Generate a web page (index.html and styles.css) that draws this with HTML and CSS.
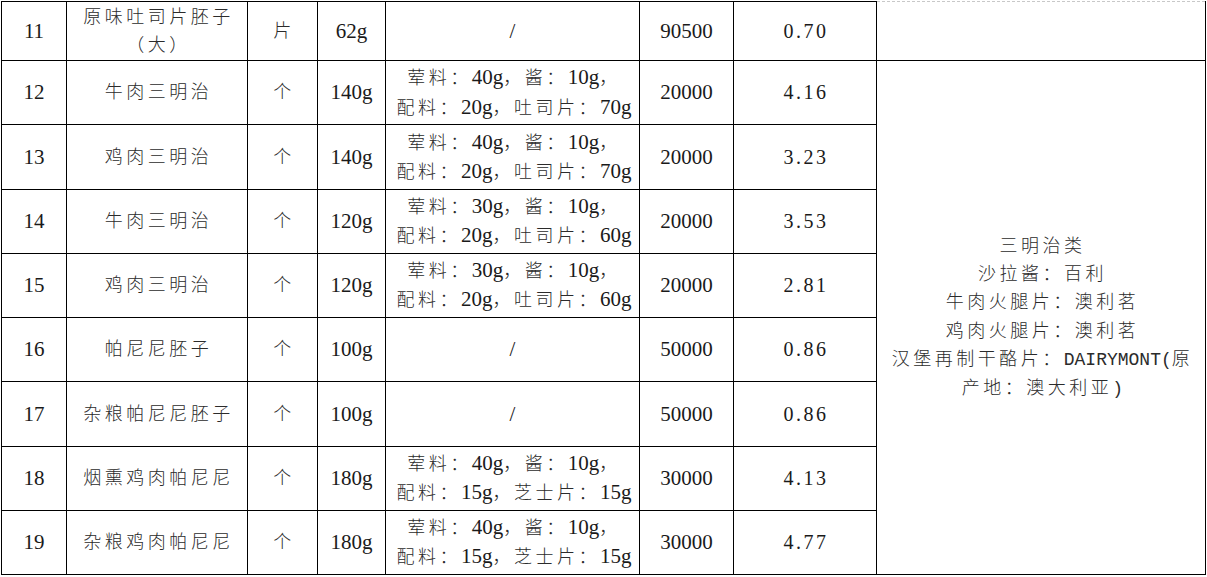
FILE: index.html
```html
<!DOCTYPE html>
<html lang="zh-CN">
<head>
<meta charset="utf-8">
<title>三明治类</title>
<link rel="stylesheet" href="styles.css">
</head>
<body>
<table class="grid">
  <colgroup>
    <col class="c1"><col class="c2"><col class="c3"><col class="c4"><col class="c5"><col class="c6"><col class="c7"><col class="c8">
  </colgroup>
  <tbody>
    <tr class="first">
      <td>11</td>
      <td class="cjk">原味吐司片胚子<br>（大）</td>
      <td class="cjk">片</td>
      <td>62g</td>
      <td>/</td>
      <td>90500</td>
      <td class="m">0.70</td>
      <td class="dash"></td>
    </tr>
    <tr class="row">
      <td>12</td>
      <td class="cjk">牛肉三明治</td>
      <td class="cjk">个</td>
      <td>140g</td>
      <td class="cjk">荤料：<span class="l">40g</span>，酱：<span class="l">10g</span>，<br>配料：<span class="l">20g</span>，吐司片：<span class="l">70g</span></td>
      <td>20000</td>
      <td class="m">4.16</td>
      <td class="cjk notes" rowspan="8">三明治类<br>沙拉酱：百利<br>牛肉火腿片：澳利茗<br>鸡肉火腿片：澳利茗<br>汉堡再制干酪片：<span class="mono">DAIRYMONT(</span>原<br>产地：澳大利亚<span class="mono">)</span></td>
    </tr>
    <tr class="row">
      <td>13</td>
      <td class="cjk">鸡肉三明治</td>
      <td class="cjk">个</td>
      <td>140g</td>
      <td class="cjk">荤料：<span class="l">40g</span>，酱：<span class="l">10g</span>，<br>配料：<span class="l">20g</span>，吐司片：<span class="l">70g</span></td>
      <td>20000</td>
      <td class="m">3.23</td>
    </tr>
    <tr class="row">
      <td>14</td>
      <td class="cjk">牛肉三明治</td>
      <td class="cjk">个</td>
      <td>120g</td>
      <td class="cjk">荤料：<span class="l">30g</span>，酱：<span class="l">10g</span>，<br>配料：<span class="l">20g</span>，吐司片：<span class="l">60g</span></td>
      <td>20000</td>
      <td class="m">3.53</td>
    </tr>
    <tr class="row">
      <td>15</td>
      <td class="cjk">鸡肉三明治</td>
      <td class="cjk">个</td>
      <td>120g</td>
      <td class="cjk">荤料：<span class="l">30g</span>，酱：<span class="l">10g</span>，<br>配料：<span class="l">20g</span>，吐司片：<span class="l">60g</span></td>
      <td>20000</td>
      <td class="m">2.81</td>
    </tr>
    <tr class="row">
      <td>16</td>
      <td class="cjk">帕尼尼胚子</td>
      <td class="cjk">个</td>
      <td>100g</td>
      <td>/</td>
      <td>50000</td>
      <td class="m">0.86</td>
    </tr>
    <tr class="row">
      <td>17</td>
      <td class="cjk">杂粮帕尼尼胚子</td>
      <td class="cjk">个</td>
      <td>100g</td>
      <td>/</td>
      <td>50000</td>
      <td class="m">0.86</td>
    </tr>
    <tr class="row">
      <td>18</td>
      <td class="cjk">烟熏鸡肉帕尼尼</td>
      <td class="cjk">个</td>
      <td>180g</td>
      <td class="cjk">荤料：<span class="l">40g</span>，酱：<span class="l">10g</span>，<br>配料：<span class="l">15g</span>，芝士片：<span class="l">15g</span></td>
      <td>30000</td>
      <td class="m">4.13</td>
    </tr>
    <tr class="row">
      <td>19</td>
      <td class="cjk">杂粮鸡肉帕尼尼</td>
      <td class="cjk">个</td>
      <td>180g</td>
      <td class="cjk">荤料：<span class="l">40g</span>，酱：<span class="l">10g</span>，<br>配料：<span class="l">15g</span>，芝士片：<span class="l">15g</span></td>
      <td>30000</td>
      <td class="m">4.77</td>
    </tr>
  </tbody>
</table>
</body>
</html>
```

FILE: styles.css
```css
html, body {
  margin: 0;
  background: #ffffff;
}

body {
  padding: 1px 0 0 1px;
}

.grid {
  border-collapse: collapse;
  table-layout: fixed;
  width: 1205px;
  font-family: "Liberation Serif", "Noto Sans CJK SC", serif;
  color: #1a1a1a;
}

.c1 { width: 65px; }
.c2 { width: 181px; }
.c3 { width: 70px; }
.c4 { width: 68px; }
.c5 { width: 254px; }
.c6 { width: 94px; }
.c7 { width: 143px; }
.c8 { width: 329px; }

.first { height: 59px; }
.row { height: 64.25px; }

.grid td {
  border: 1px solid #000000;
  padding: 0;
  text-align: center;
  vertical-align: middle;
  font-size: 21px;
  line-height: 28.3px;
  white-space: nowrap;
}

.grid td.cjk {
  font-family: "Liberation Serif", "Noto Sans CJK SC", serif;
  font-size: 18px;
  font-weight: 300;
  color: #2b2b2b;
  letter-spacing: 3.5px;
  padding-left: 3px;
}

.l {
  font-size: 21px;
  font-weight: 400;
  color: #1a1a1a;
  letter-spacing: 0;
}

.grid td.m {
  font-size: 20px;
  letter-spacing: 2.5px;
  padding-left: 2px;
}

.mono {
  font-family: "Liberation Mono", monospace;
  font-size: 18px;
  letter-spacing: 0;
  color: #2b2b2b;
}

.grid td.dash {
  border-top: 1px dashed #c8c8c8;
}
```
